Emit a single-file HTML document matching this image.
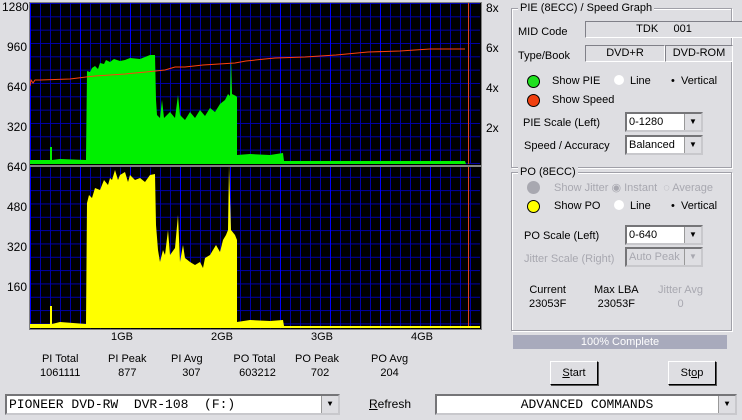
<!DOCTYPE html>
<html><head><meta charset="utf-8"><style>
body{margin:0;width:742px;height:420px;background:#dedee2;font-family:"Liberation Sans",sans-serif;font-size:11px;color:#000;position:relative;overflow:hidden}
.a{position:absolute;white-space:nowrap}
.grp{position:absolute;border:1px solid #a0a0a8;box-shadow:1px 1px 0 #fff inset,1px 1px 0 #fff}
.lg{position:absolute;background:#dedee2;padding:0 2px;top:-7px;left:6px}
.box{position:absolute;border:1px solid #808088;border-right-color:#fff;border-bottom-color:#fff;background:#dedee2;text-align:center;line-height:15px}
.cb{position:absolute;background:#fff;border:2px inset #c8c8cc;line-height:16px;padding-left:2px}
.cb i{position:absolute;right:0;top:0;width:16px;height:100%;background:#dedee2;border-left:1px solid #999;font-style:normal;text-align:center;font-size:8px;line-height:16px}
.btn{position:absolute;border:1px solid #000;border-top-color:#fff;border-left-color:#fff;box-shadow:1px 1px 0 #555;background:#dedee2;text-align:center;line-height:22px}
.dot{position:absolute;width:11px;height:11px;border-radius:50%;border:1px solid #000}
.rad{position:absolute;width:10px;height:10px;border-radius:50%;background:#fff}
.dis{color:#a8a8b0}
</style></head><body>
<svg class="a" style="left:0;top:0" width="500" height="340">
<defs>
<pattern id="g" patternUnits="userSpaceOnUse" x="30" y="3" width="10" height="13.33"><path d="M0.5 0V14M0 0.5H10" stroke="#0000a8" stroke-width="1"/></pattern>
</defs>
<rect x="29" y="3" width="453" height="162" fill="#000"/>
<rect x="30" y="3" width="450" height="161" fill="url(#g)"/>
<rect x="29" y="167" width="453" height="162" fill="#000"/>
<rect x="30" y="167" width="450" height="161" fill="url(#g)" transform="translate(0,0.5)"/>
<g stroke="#0000ff"><path d="M80.5 3V164M130.5 3V164M180.5 3V164M230.5 3V164M280.5 3V164M330.5 3V164M380.5 3V164M430.5 3V164M80.5 167V328M130.5 167V328M180.5 167V328M230.5 167V328M280.5 167V328M330.5 167V328M380.5 167V328M430.5 167V328M30.5 3V164M30.5 167V328"/></g>
<path d="M468.5 3V164M468.5 167V328" stroke="#e04020"/>
<polygon fill="#00f000" points="30,164 30,160 50,160 50,147 52,147 52,160 60,159 86,160 87,71 90,72 92,68 95,66 98,69 100,63 104,64 106,60 110,62 114,59 120,61 125,60 130,58 140,59 145,57 150,55 155,55 156,100 157,115 160,118 162,100 164,118 170,112 175,118 178,95 180,115 185,120 190,112 195,118 200,110 205,116 210,108 215,112 220,104 225,100 228,94 230,96 231,56 232,94 236,96 237,97 237,155 250,154 270,155 283,153 284,161 400,161 465,161 466,164"/>
<polyline fill="none" stroke="#ff4010" points="30,86 31,80 33,83 35,80 40,80 70,79 86,77 95,76 110,75 125,74 146,72 165,70 175,67 185,67 203,65 235,63 246,61 275,58 305,57 336,55 368,52 400,51 430,49 465,49"/>
<polygon fill="#ffff00" points="30,328 30,324 50,324 50,306 52,306 52,324 60,322 86,324 87,203 89,195 92,198 95,188 100,190 104,180 108,185 110,178 112,180 115,170 118,180 120,175 125,172 128,182 130,175 135,180 140,178 145,182 150,175 155,174 156,225 158,250 160,262 163,250 165,255 168,230 170,255 175,248 178,215 180,262 183,245 185,258 190,262 195,265 200,262 203,268 205,258 210,255 213,250 216,245 220,252 223,240 226,235 228,230 229,165 231,230 235,235 237,240 237,322 250,320 270,321 283,320 284,326 480,326 480,328"/>
<rect x="29.5" y="2.5" width="452" height="163" fill="none" stroke="#808080"/>
<rect x="29.5" y="166.5" width="452" height="163" fill="none" stroke="#808080"/>
</svg>
<div class="a" style="left:2px;top:0px;font-size:12px">1280</div>
<div class="a" style="left:7px;top:40px;font-size:12px">960</div>
<div class="a" style="left:7px;top:80px;font-size:12px">640</div>
<div class="a" style="left:7px;top:120px;font-size:12px">320</div>
<div class="a" style="left:7px;top:160px;font-size:12px">640</div>
<div class="a" style="left:7px;top:200px;font-size:12px">480</div>
<div class="a" style="left:7px;top:240px;font-size:12px">320</div>
<div class="a" style="left:7px;top:280px;font-size:12px">160</div>
<div class="a" style="left:486px;top:1px;font-size:12px">8x</div>
<div class="a" style="left:486px;top:41px;font-size:12px">6x</div>
<div class="a" style="left:486px;top:81px;font-size:12px">4x</div>
<div class="a" style="left:486px;top:121px;font-size:12px">2x</div>
<div class="a" style="left:111px;top:331px">1GB</div>
<div class="a" style="left:211px;top:331px">2GB</div>
<div class="a" style="left:311px;top:331px">3GB</div>
<div class="a" style="left:411px;top:331px">4GB</div>
<div class="a" style="left:40px;top:352px;text-align:center;line-height:14px">PI Total<br>1061111</div>
<div class="a" style="left:108px;top:352px;text-align:center;line-height:14px">PI Peak<br>877</div>
<div class="a" style="left:171px;top:352px;text-align:center;line-height:14px">PI Avg<br>&nbsp;&nbsp;&nbsp;307</div>
<div class="a" style="left:233px;top:352px;text-align:center;line-height:14px">PO Total<br>&nbsp;&nbsp;603212</div>
<div class="a" style="left:295px;top:352px;text-align:center;line-height:14px">PO Peak<br>&nbsp;&nbsp;702</div>
<div class="a" style="left:371px;top:352px;text-align:center;line-height:14px">PO Avg<br>204</div>

<div class="grp" style="left:511px;top:8px;width:219px;height:158px"><span class="lg">PIE (8ECC) / Speed Graph</span></div>
<div class="a" style="left:518px;top:26px">MID Code</div>
<div class="box" style="left:585px;top:21px;width:156px;height:15px">TDK &nbsp;&nbsp;&nbsp; 001</div>
<div class="a" style="left:518px;top:50px">Type/Book</div>
<div class="box" style="left:585px;top:45px;width:78px;height:15px">DVD+R</div>
<div class="box" style="left:665px;top:45px;width:66px;height:15px">DVD-ROM</div>
<div class="dot" style="left:527px;top:75px;background:#20e020"></div>
<div class="a" style="left:552px;top:75px">Show PIE</div>
<div class="rad" style="left:614px;top:75px"></div><div class="a" style="left:630px;top:75px">Line</div>
<div class="a" style="left:671px;top:75px">•&nbsp;&nbsp;Vertical</div>
<div class="dot" style="left:527px;top:94px;background:#f04010"></div>
<div class="a" style="left:552px;top:94px">Show Speed</div>
<div class="a" style="left:523px;top:117px">PIE Scale (Left)</div>
<div class="cb" style="left:625px;top:112px;width:72px;height:16px">0-1280<i>▼</i></div>
<div class="a" style="left:524px;top:140px">Speed / Accuracy</div>
<div class="cb" style="left:625px;top:135px;width:72px;height:16px">Balanced<i>▼</i></div>

<div class="grp" style="left:511px;top:172px;width:219px;height:157px"><span class="lg">PO (8ECC)</span></div>
<div class="dot" style="left:527px;top:181px;background:#a8a8b0;border-color:#a8a8b0"></div>
<div class="a dis" style="left:554px;top:181px">Show Jitter ◉ Instant &nbsp;◌ Average</div>
<div class="dot" style="left:527px;top:200px;background:#ffff00"></div>
<div class="a" style="left:554px;top:200px">Show PO</div>
<div class="rad" style="left:614px;top:200px"></div><div class="a" style="left:630px;top:200px">Line</div>
<div class="a" style="left:671px;top:200px">•&nbsp;&nbsp;Vertical</div>
<div class="a" style="left:524px;top:230px">PO Scale (Left)</div>
<div class="cb" style="left:625px;top:225px;width:72px;height:16px">0-640<i>▼</i></div>
<div class="a dis" style="left:524px;top:253px">Jitter Scale (Right)</div>
<div class="cb" style="left:625px;top:247px;width:72px;height:16px;background:#dedee2;color:#a8a8b0">Auto Peak<i style="color:#a8a8b0">▼</i></div>
<div class="a" style="left:529px;top:283px;text-align:center;line-height:14px">Current<br>23053F</div>
<div class="a" style="left:594px;top:283px;text-align:center;line-height:14px">Max LBA<br>23053F</div>
<div class="a dis" style="left:658px;top:283px;text-align:center;line-height:14px">Jitter Avg<br>0</div>
<div class="a" style="left:513px;top:335px;width:214px;height:14px;background:#a8aabc;color:#fff;text-align:center;line-height:14px">100% Complete</div>
<div class="btn" style="left:550px;top:361px;width:46px;height:22px"><u>S</u>tart</div>
<div class="btn" style="left:668px;top:361px;width:46px;height:22px">St<u>o</u>p</div>

<div class="cb" style="left:5px;top:394px;width:329px;height:17px;font-family:'Liberation Mono',monospace;font-size:13px;line-height:17px">PIONEER DVD-RW &nbsp;DVR-108 &nbsp;(F:)<i style="line-height:17px">▼</i></div>
<div class="a" style="left:369px;top:397px;font-size:12px"><u>R</u>efresh</div>
<div class="cb" style="left:435px;top:394px;width:296px;height:17px;font-family:'Liberation Mono',monospace;font-size:13px;line-height:17px;text-align:center">ADVANCED COMMANDS<i style="line-height:17px">▼</i></div>
</body></html>
